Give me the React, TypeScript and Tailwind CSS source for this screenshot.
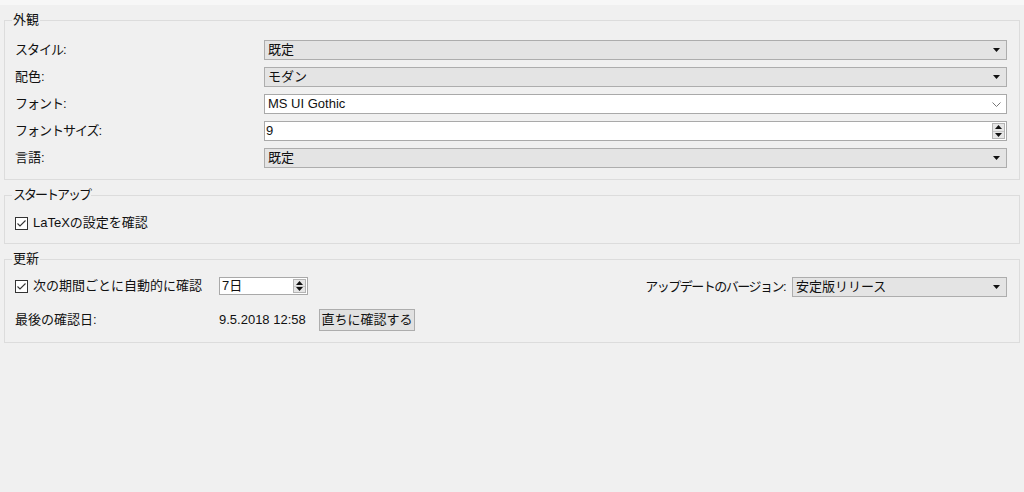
import React from 'react';

const DropArrow = () => (
  <svg width="7" height="4" viewBox="0 0 7 4" className="shrink-0">
    <polygon points="0,0 7,0 3.5,4" fill="#111" />
  </svg>
);

const Chevron = () => (
  <svg width="9" height="5" viewBox="0 0 9 5" className="shrink-0">
    <polyline points="0.5,0.5 4.5,4.5 8.5,0.5" fill="none" stroke="#777" strokeWidth="1" />
  </svg>
);

const SpinArrows = ({ h = 'h-[16px]' }: { h?: string }) => (
  <div className={`w-[13px] ${h} mr-[1px] flex flex-col border border-[#b4b4b4] bg-[#e6e6e6]`}>
    <div className="flex-1 flex items-center justify-center border-b border-[#c8c8c8]">
      <svg width="7" height="4" viewBox="0 0 7 4">
        <polygon points="3.5,0 7,4 0,4" fill="#111" />
      </svg>
    </div>
    <div className="flex-1 flex items-center justify-center">
      <svg width="7" height="4" viewBox="0 0 7 4">
        <polygon points="0,0 7,0 3.5,4" fill="#111" />
      </svg>
    </div>
  </div>
);

const Checkbox = () => (
  <div className="w-[13px] h-[13px] shrink-0 border border-[#333] bg-white flex items-center justify-center">
    <svg width="11" height="11" viewBox="0 0 11 11">
      <polyline points="1.5,5.5 4,8 9.5,2.5" fill="none" stroke="#333" strokeWidth="1.1" />
    </svg>
  </div>
);

const Select = ({ value, className = '' }: { value: string; className?: string }) => (
  <div className={`h-[20px] flex items-center justify-between pl-[3px] pr-[6px] bg-[#e4e4e4] border border-[#adadad] ${className}`}>
    <span className="leading-[18px]">{value}</span>
    <DropArrow />
  </div>
);

const GroupBox = ({ title, titleClass = '', className = '', children }: { title: string; titleClass?: string; className?: string; children: React.ReactNode }) => (
  <fieldset className={`border border-[#dcdcdc] ${className}`}>
    <legend className={`ml-[7px] px-[1px] leading-[16px] ${titleClass}`}>{title}</legend>
    <div className="pl-[10px] pr-[12px]">{children}</div>
  </fieldset>
);

export default function App() {
  return (
    <div className="w-[1024px] h-[492px] bg-[#f0f0f0] text-[13px] text-[#111] font-['Liberation_Sans','Noto_Sans_CJK_JP',sans-serif] overflow-hidden">
      <div className="h-[5px] bg-[#f7f7f7]" />
      <div className="px-[4px] pt-[7px] flex flex-col gap-[7px]">
        <GroupBox title="外観" className="pt-[12px] pb-[11px]">
          <div className="grid grid-cols-[249px_1fr] gap-y-[7px] items-center">
            <span className="tracking-[-1px]">スタイル:</span>
            <Select value="既定" />
            <span>配色:</span>
            <Select value="モダン" />
            <span className="tracking-[-1px]">フォント:</span>
            <div className="h-[20px] flex items-center justify-between pl-[3px] pr-[5px] bg-white border border-[#a9a9a9]">
              <span className="leading-[18px]">MS UI Gothic</span>
              <Chevron />
            </div>
            <span className="tracking-[-1px]">フォントサイズ:</span>
            <div className="h-[20px] flex items-center justify-between pl-[1px] bg-white border border-[#a9a9a9]">
              <span className="leading-[18px]">9</span>
              <SpinArrows />
            </div>
            <span>言語:</span>
            <Select value="既定" />
          </div>
        </GroupBox>

        <GroupBox title="スタートアップ" titleClass="tracking-[-2px]" className="pt-[10px] pb-[10px]">
          <div className="h-[20px] flex items-center gap-[5px]">
            <Checkbox />
            <span>LaTeXの設定を確認</span>
          </div>
        </GroupBox>

        <GroupBox title="更新" className="pt-[10px] pb-[11px]">
          <div className="flex flex-col gap-[12px]">
            <div className="h-[20px] flex items-start">
              <div className="w-[204px] h-[18px] flex items-center gap-[5px]">
                <Checkbox />
                <span>次の期間ごとに自動的に確認</span>
              </div>
              <div className="w-[89px] h-[18px] flex items-center justify-between pl-[2px] bg-white border border-[#a9a9a9]">
                <span className="leading-[16px]">7日</span>
                <SpinArrows h="h-[14px]" />
              </div>
              <div className="ml-auto flex items-center gap-[7px]">
                <span className="tracking-[-1.5px]">アップデートのバージョン:</span>
                <Select value="安定版リリース" className="w-[215px]" />
              </div>
            </div>
            <div className="h-[22px] flex items-center">
              <span className="w-[204px]">最後の確認日:</span>
              <span className="w-[100px]">9.5.2018 12:58</span>
              <div className="w-[96px] h-[22px] flex items-center justify-center bg-[#e1e1e1] border border-[#adadad]">
                直ちに確認する
              </div>
            </div>
          </div>
        </GroupBox>
      </div>
    </div>
  );
}
